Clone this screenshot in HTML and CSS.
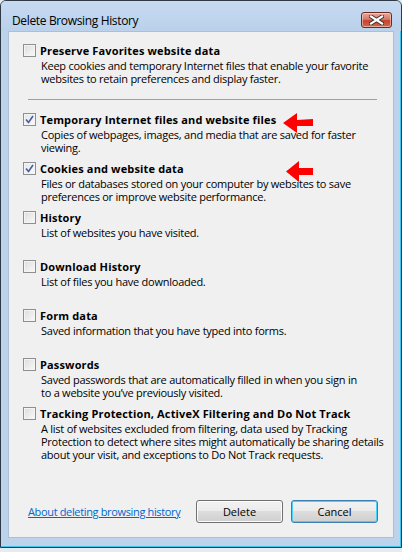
FILE: index.html
```html
<!DOCTYPE html>
<html>
<head>
<meta charset="utf-8">
<title>Delete Browsing History</title>
<link rel="stylesheet" href="styles.css">
</head>
<body>
<div class="window">
  <div class="titlebar">
    <span class="title">Delete Browsing History</span>
    <div class="close">
      <svg width="15" height="10" viewBox="0 0 15 10">
        <path d="M2 1.5 L13 8.5 M13 1.5 L2 8.5" stroke="#3a2a28" stroke-width="4" stroke-linecap="square"/>
        <path d="M2 1.5 L13 8.5 M13 1.5 L2 8.5" stroke="#ffffff" stroke-width="2.2" stroke-linecap="square"/>
      </svg>
    </div>
  </div>
  <div class="client">
    <div class="option">
      <span class="cb"></span>
      <div class="text">
        <div class="head">Preserve Favorites website data</div>
        <div class="desc">Keep cookies and temporary Internet files that enable your favorite<br>websites to retain preferences and display faster.</div>
      </div>
    </div>
    <div class="sep"></div>
    <div class="list">
      <div class="option row">
        <span class="cb checked"><svg width="11" height="11" viewBox="0 0 11 11"><path d="M2 5.5 L4.5 8.5 L9 2" fill="none" stroke="#4b5d94" stroke-width="1.6"/></svg></span>
        <div class="text">
          <div class="head">Temporary Internet files and website files</div>
          <div class="desc">Copies of webpages, images, and media that are saved for faster<br>viewing.</div>
        </div>
      </div>
      <div class="option row">
        <span class="cb checked"><svg width="11" height="11" viewBox="0 0 11 11"><path d="M2 5.5 L4.5 8.5 L9 2" fill="none" stroke="#4b5d94" stroke-width="1.6"/></svg></span>
        <div class="text">
          <div class="head">Cookies and website data</div>
          <div class="desc">Files or databases stored on your computer by websites to save<br>preferences or improve website performance.</div>
        </div>
      </div>
      <div class="option row">
        <span class="cb"></span>
        <div class="text">
          <div class="head">History</div>
          <div class="desc">List of websites you have visited.</div>
        </div>
      </div>
      <div class="option row">
        <span class="cb"></span>
        <div class="text">
          <div class="head">Download History</div>
          <div class="desc">List of files you have downloaded.</div>
        </div>
      </div>
      <div class="option row">
        <span class="cb"></span>
        <div class="text">
          <div class="head">Form data</div>
          <div class="desc">Saved information that you have typed into forms.</div>
        </div>
      </div>
      <div class="option row">
        <span class="cb"></span>
        <div class="text">
          <div class="head">Passwords</div>
          <div class="desc">Saved passwords that are automatically filled in when you sign in<br>to a website you’ve previously visited.</div>
        </div>
      </div>
      <div class="option row">
        <span class="cb"></span>
        <div class="text">
          <div class="head">Tracking Protection, ActiveX Filtering and Do Not Track</div>
          <div class="desc">A list of websites excluded from filtering, data used by Tracking<br>Protection to detect where sites might automatically be sharing details<br>about your visit, and exceptions to Do Not Track requests.</div>
        </div>
      </div>
    </div>
    <div class="footer">
      <a class="link" href="#">About deleting browsing history</a>
      <div class="buttons">
        <div class="btn">Delete</div>
        <div class="btn default">Cancel</div>
      </div>
    </div>
  </div>
</div>
<svg class="arrows" width="402" height="552" viewBox="0 0 402 552">
  <polygon points="283,123 297,113 297,120 313,119 313,126 297,126 297,133" fill="#ff0000"/>
  <polygon points="286,171.5 299,161 299,168 313,168 313,175 299,175 299,182" fill="#ff0000"/>
</svg>
</body>
</html>
```
FILE: styles.css
```css
* { box-sizing: border-box; }

html, body {
  margin: 0;
  padding: 0;
}

body {
  width: 402px;
  height: 552px;
  background: #e6ebef;
  font-family: "Open Sans", "Noto Sans", sans-serif;
  color: #000;
  position: relative;
  overflow: hidden;
}

.window {
  width: 402px;
  height: 548px;
  border: 1px solid #2f3a46;
  border-radius: 6px 6px 0 0;
  background: #bcd3ec;
  box-shadow: inset -1px -1px 0 #45c4ee;
  display: flex;
  flex-direction: column;
  padding-bottom: 9px;
}

.titlebar {
  height: 30px;
  flex: none;
  display: flex;
  align-items: flex-start;
  justify-content: space-between;
  padding: 11px 9px 0 11px;
  background: linear-gradient(#c6daf1, #bad1eb);
  border-radius: 5px 5px 0 0;
}

.title {
  font-size: 12px;
  letter-spacing: -0.35px;
  line-height: 15px;
  padding-top: 1px;
  color: #000;
}

.close {
  width: 31px;
  height: 16px;
  border: 1px solid #6d2a22;
  border-radius: 3px;
  background: linear-gradient(#e8a99b 0%, #d6786a 45%, #c4432f 55%, #cf6a4f 100%);
  box-shadow: inset 0 0 0 1px rgba(255, 220, 210, 0.55);
  display: flex;
  align-items: center;
  justify-content: center;
}

.close svg { display: block; }

.client {
  flex: 1;
  margin: 0 7px;
  background: #f0f0f0;
  border: 1px solid #aebfd3;
  display: flex;
  flex-direction: column;
  padding: 11px 15px 14px 14px;
}

.option {
  display: flex;
  align-items: flex-start;
  gap: 4px;
}

.row {
  height: 49px;
}

.cb {
  width: 13px;
  height: 13px;
  flex: none;
  margin-top: 1px;
  border: 1px solid #8e8f8f;
  background: linear-gradient(135deg, #dcdcdc, #fafafa);
  box-shadow: inset 0 0 0 1px #f4f4f4;
  display: flex;
  align-items: center;
  justify-content: center;
}

.cb.checked {
  background: linear-gradient(135deg, #e2e6ee, #fafafa);
}

.cb svg { display: block; }

.text {
  flex: 1;
  white-space: nowrap;
}

.head {
  font-size: 11px;
  font-weight: bold;
  letter-spacing: 0.15px;
  line-height: 15px;
}

.desc {
  font-size: 11px;
  letter-spacing: -0.25px;
  line-height: 13px;
  margin-top: 1px;
  padding-left: 1px;
}

.sep {
  height: 1px;
  background: #a0a0a0;
  margin: 14px 1px 12px 5px;
  flex: none;
}

.footer {
  margin-top: auto;
  display: flex;
  align-items: center;
  justify-content: space-between;
  padding-left: 5px;
}

.link {
  font-size: 11px;
  letter-spacing: -0.35px;
  color: #0066cc;
  text-decoration: underline;
  white-space: nowrap;
}

.buttons {
  display: flex;
  gap: 8px;
}

.btn {
  width: 87px;
  height: 23px;
  border: 1px solid #707070;
  border-radius: 3px;
  background: linear-gradient(#f2f2f2 0%, #ebebeb 50%, #dddddd 50%, #cfcfcf 100%);
  box-shadow: inset 0 0 0 1px #fbfbfb;
  font-size: 11px;
  line-height: 21px;
  text-align: center;
}

.btn.default {
  border-color: #3c7fb1;
  box-shadow: inset 0 0 0 1px #48d2f5;
}

.arrows {
  position: absolute;
  top: 0;
  left: 0;
  pointer-events: none;
}
```
